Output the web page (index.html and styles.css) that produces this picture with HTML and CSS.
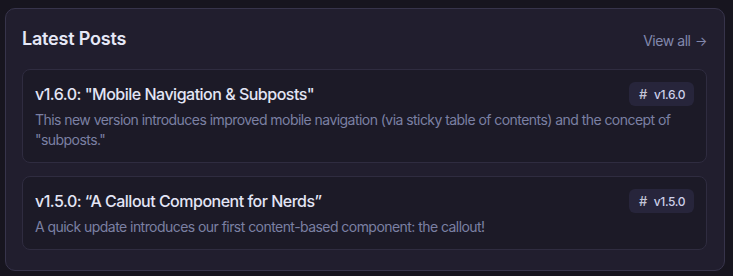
FILE: index.html
```html
<!DOCTYPE html>
<html lang="en">
<head>
<meta charset="utf-8">
<title>Latest Posts</title>
<link rel="stylesheet" href="styles.css">
</head>
<body>
<section class="panel">
  <header class="panel-head">
    <h2 class="panel-title">Latest Posts</h2>
    <a class="view-all" href="#">View all <span class="arrow">→</span></a>
  </header>
  <div class="post-list">
    <article class="post">
      <div class="post-top">
        <h3 class="post-title">v1.6.0: "Mobile Navigation &amp; Subposts"</h3>
        <span class="tag"><span class="hash">#</span>v1.6.0</span>
      </div>
      <p class="post-desc">This new version introduces improved mobile navigation (via sticky table of contents) and the concept of "subposts."</p>
    </article>
    <article class="post">
      <div class="post-top">
        <h3 class="post-title">v1.5.0: “A Callout Component for Nerds”</h3>
        <span class="tag"><span class="hash">#</span>v1.5.0</span>
      </div>
      <p class="post-desc">A quick update introduces our first content-based component: the callout!</p>
    </article>
  </div>
</section>
</body>
</html>
```

FILE: styles.css
```css
* { box-sizing: border-box; }
html, body { margin: 0; padding: 0; }
body {
  background: #17151f;
  font-family: Inter, "Noto Sans", sans-serif;
  padding: 8px 8px 0 5px;
  width: 733px;
  height: 276px;
  overflow: hidden;
}
.panel {
  width: 720px;
  background: #211e2e;
  border: 1px solid #37344b;
  border-radius: 10px;
  padding: 16px 17px 20px 16px;
}
.panel-head {
  display: flex;
  justify-content: space-between;
  align-items: center;
  height: 28px;
  margin-bottom: 16px;
}
.panel-title {
  margin: 0;
  font-size: 18px;
  line-height: 28px;
  font-weight: 600;
  color: #e6e8f7;
  letter-spacing: -0.2px;
}
.view-all {
  font-size: 14px;
  line-height: 20px;
  color: #8288ad;
  text-decoration: none;
  padding-top: 4px;
  letter-spacing: -0.45px;
}
.arrow { font-size: 13px; margin-left: 1px; }
.post-list {
  display: flex;
  flex-direction: column;
  gap: 13px;
}
.post {
  background: #1c1a27;
  border: 1px solid #2f2c40;
  border-radius: 8px;
  padding: 12px;
}
.post-top {
  display: flex;
  justify-content: space-between;
  align-items: center;
  height: 24px;
}
.post-title {
  margin: 0;
  font-size: 16px;
  line-height: 24px;
  font-weight: 500;
  color: #e3e5f5;
  letter-spacing: -0.5px;
}
.tag {
  display: inline-flex;
  align-items: center;
  height: 24px;
  padding: 0 9px 0 10px;
  border-radius: 6px;
  background: #27253b;
  font-size: 12px;
  font-weight: 500;
  color: #cdd0ea;
  letter-spacing: -0.4px;
}
.hash {
  font-weight: 500;
  color: #c4c6d8;
  margin-right: 7px;
  font-size: 13px;
}
.post-desc {
  margin: 4px 0 0;
  font-size: 14px;
  line-height: 20px;
  color: #7b80a3;
  letter-spacing: -0.55px;
}
```
